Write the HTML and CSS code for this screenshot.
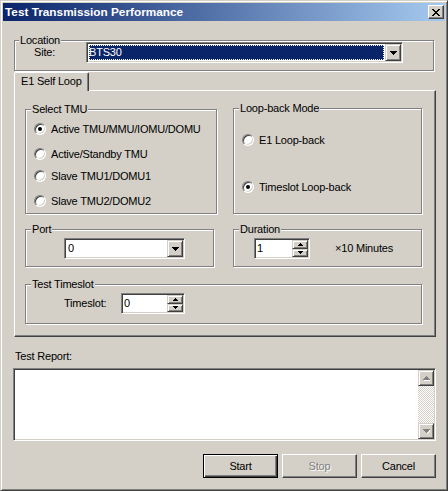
FILE: index.html
```html
<!DOCTYPE html>
<html>
<head>
<meta charset="utf-8">
<title>Test Transmission Performance</title>
<link rel="stylesheet" href="styles.css">
</head>
<body>
<div class="window">
  <div class="titlebar">
    <span class="title">Test Transmission Performance</span>
    <span class="close-btn">
      <svg width="8" height="7" viewBox="0 0 8 7" shape-rendering="crispEdges"><path fill="#000" d="M0 0h2v1H0zM6 0h2v1H6zM1 1h2v1H1zM5 1h2v1H5zM2 2h4v1H2zM3 3h2v1H3zM2 4h4v1H2zM1 5h2v1H1zM5 5h2v1H5zM0 6h2v1H0zM6 6h2v1H6z"/></svg>
    </span>
  </div>

  <div class="client">
    <div class="group loc-group">
      <span class="legend">Location</span>
      <div class="site-row">
        <span class="site-label">Site:</span>
        <div class="combo site-combo">
          <div class="combo-value"><span class="highlight">BTS30</span></div>
          <span class="drop-btn"><svg width="7" height="4" viewBox="0 0 7 4" shape-rendering="crispEdges"><path fill="#000" d="M0 0h7v1H0zM1 1h5v1H1zM2 2h3v1H2zM3 3h1v1H3z"/></svg></span>
        </div>
      </div>
    </div>

    <div class="tabs">
      <div class="tab">E1 Self Loop</div>
    </div>

    <div class="tab-panel">
      <div class="panel-grid">
        <div class="group tmu-group">
          <span class="legend">Select TMU</span>
          <div class="radio-row"><span class="radio checked"></span><span>Active TMU/MMU/IOMU/DOMU</span></div>
          <div class="radio-row"><span class="radio"></span><span>Active/Standby TMU</span></div>
          <div class="radio-row"><span class="radio"></span><span>Slave TMU1/DOMU1</span></div>
          <div class="radio-row"><span class="radio"></span><span>Slave TMU2/DOMU2</span></div>
        </div>

        <div class="group loop-group">
          <span class="legend">Loop-back Mode</span>
          <div class="radio-row"><span class="radio"></span><span>E1 Loop-back</span></div>
          <div class="radio-row"><span class="radio checked"></span><span>Timeslot Loop-back</span></div>
        </div>

        <div class="group port-group">
          <span class="legend">Port</span>
          <div class="combo port-combo">
            <div class="combo-value plain">0</div>
            <span class="drop-btn"><svg width="7" height="4" viewBox="0 0 7 4" shape-rendering="crispEdges"><path fill="#000" d="M0 0h7v1H0zM1 1h5v1H1zM2 2h3v1H2zM3 3h1v1H3z"/></svg></span>
          </div>
        </div>

        <div class="group dur-group">
          <span class="legend">Duration</span>
          <div class="field-row">
            <div class="spin dur-spin">
              <div class="spin-value">1</div>
              <div class="spin-btns">
                <span class="spin-btn"><svg width="5" height="3" viewBox="0 0 5 3" shape-rendering="crispEdges"><path fill="#000" d="M2 0h1v1H2zM1 1h3v1H1zM0 2h5v1H0z"/></svg></span>
                <span class="spin-btn"><svg width="5" height="3" viewBox="0 0 5 3" shape-rendering="crispEdges"><path fill="#000" d="M0 0h5v1H0zM1 1h3v1H1zM2 2h1v1H2z"/></svg></span>
              </div>
            </div>
            <span class="unit">×10 Minutes</span>
          </div>
        </div>

        <div class="group slot-group">
          <span class="legend">Test Timeslot</span>
          <div class="field-row">
            <span class="slot-label">Timeslot:</span>
            <div class="spin slot-spin">
              <div class="spin-value">0</div>
              <div class="spin-btns">
                <span class="spin-btn"><svg width="5" height="3" viewBox="0 0 5 3" shape-rendering="crispEdges"><path fill="#000" d="M2 0h1v1H2zM1 1h3v1H1zM0 2h5v1H0z"/></svg></span>
                <span class="spin-btn"><svg width="5" height="3" viewBox="0 0 5 3" shape-rendering="crispEdges"><path fill="#000" d="M0 0h5v1H0zM1 1h3v1H1zM2 2h1v1H2z"/></svg></span>
              </div>
            </div>
          </div>
        </div>
      </div>
    </div>

    <div class="report-label">Test Report:</div>
    <div class="report-box">
      <div class="report-text"></div>
      <div class="vscroll">
        <span class="scroll-btn"><svg width="7" height="5" viewBox="0 0 7 5" shape-rendering="crispEdges"><path fill="#fff" d="M4 1h1v1H4zM5 2h1v1H5zM1 4h7v1H1z"/><path fill="#808080" d="M3 0h1v1H3zM2 1h3v1H2zM1 2h5v1H1zM0 3h7v1H0z"/></svg></span>
        <span class="scroll-track"></span>
        <span class="scroll-btn"><svg width="7" height="5" viewBox="0 0 7 5" shape-rendering="crispEdges"><path fill="#fff" d="M1 1h7v1H1zM6 2h1v1H6zM5 3h1v1H5zM4 4h1v1H4z"/><path fill="#808080" d="M0 0h7v1H0zM1 1h5v1H1zM2 2h3v1H2zM3 3h1v1H3z"/></svg></span>
      </div>
    </div>

    <div class="buttons">
      <span class="btn default">Start</span>
      <span class="btn disabled">Stop</span>
      <span class="btn">Cancel</span>
    </div>
  </div>
</div>
</body>
</html>
```

FILE: styles.css
```css
html, body {
  margin: 0;
  padding: 0;
  background: #D4D0C8;
}

body {
  font-family: "Liberation Sans", Arial, sans-serif;
  font-size: 11px;
  line-height: 13px;
  letter-spacing: -0.2px;
  color: #000;
}

.window {
  width: 448px;
  height: 491px;
  box-sizing: border-box;
  border: 1px solid;
  border-color: #D4D0C8 #404040 #404040 #D4D0C8;
  box-shadow: inset 1px 1px 0 #fff, inset -1px -1px 0 #808080;
  padding: 2px;
  background: #D4D0C8;
  display: flex;
  flex-direction: column;
}

/* ---------- title bar ---------- */
.titlebar {
  height: 18px;
  flex: none;
  display: flex;
  align-items: center;
  justify-content: space-between;
  padding: 0 1px 0 2px;
  background: linear-gradient(to right, #0A246A, #A6CAF0);
}

.title {
  color: #fff;
  font-weight: bold;
  font-size: 11.8px;
  letter-spacing: 0;
}

.close-btn {
  width: 16px;
  height: 14px;
  box-sizing: border-box;
  border: 1px solid;
  border-color: #fff #404040 #404040 #fff;
  box-shadow: inset -1px -1px 0 #808080;
  background: #D4D0C8;
  display: flex;
  align-items: center;
  justify-content: center;
  padding-right: 1px;
}

.close-btn svg { display: block; }

/* ---------- client ---------- */
.client {
  display: flex;
  flex-direction: column;
  align-items: flex-start;
}

/* etched group box */
.group {
  position: relative;
  box-sizing: border-box;
  border: 1px solid #808080;
  box-shadow: inset 1px 1px 0 #fff, 1px 1px 0 #fff;
}

.legend {
  position: absolute;
  top: -7px;
  left: 5px;
  padding: 0 1px;
  line-height: 13px;
  background: #D4D0C8;
  white-space: nowrap;
}

.loc-group {
  margin: 19px 0 0 11px;
  width: 420px;
  height: 31px;
  padding-top: 1px;
}

.loc-group .legend { left: 4px; }

.site-row {
  display: flex;
  align-items: center;
}

.site-label {
  margin-left: 19px;
  width: 52px;
}

/* combo box */
.combo {
  display: flex;
  box-sizing: border-box;
  height: 21px;
  border: 1px solid;
  border-color: #808080 #fff #fff #808080;
  box-shadow: inset 1px 1px 0 #404040, inset -1px -1px 0 #D4D0C8;
  padding: 1px;
  background: #fff;
}

.combo-value {
  flex: 1;
  display: flex;
  align-items: center;
  background: #fff;
  min-width: 0;
}

.combo-value.plain { padding-left: 2px; }

.highlight {
  flex: 1;
  align-self: stretch;
  margin: 1px;
  display: flex;
  align-items: center;
  background: #0A246A;
  color: #fff;
  outline: 1px dotted #fff;
  outline-offset: -1px;
}

.drop-btn {
  width: 16px;
  box-sizing: border-box;
  border: 1px solid;
  border-color: #D4D0C8 #404040 #404040 #D4D0C8;
  box-shadow: inset 1px 1px 0 #fff, inset -1px -1px 0 #808080;
  background: #D4D0C8;
  display: flex;
  align-items: center;
  justify-content: center;
}

.drop-btn svg { display: block; }

.site-combo { width: 317px; }

/* ---------- tabs ---------- */
.tabs {
  margin: 1px 0 0 11px;
  height: 18px;
}

.tab {
  position: relative;
  z-index: 1;
  width: 75px;
  height: 19px;
  box-sizing: border-box;
  border-top: 1px solid #fff;
  border-left: 1px solid #fff;
  border-right: 1px solid #404040;
  border-radius: 2px 2px 0 0;
  box-shadow: inset -1px 0 0 #808080;
  background: #D4D0C8;
  padding: 1px 0 0 6px;
  line-height: 14px;
}

.tab-panel {
  margin-left: 11px;
  width: 422px;
  height: 247px;
  box-sizing: border-box;
  border: 1px solid;
  border-color: #fff #404040 #404040 #fff;
  box-shadow: inset -1px -1px 0 #808080;
  padding: 17px 0 0 10px;
}

.panel-grid {
  display: grid;
  grid-template-columns: 208px 189px;
  align-items: start;
}

.tmu-group {
  margin-top: 1px;
  width: 192px;
  height: 105px;
  padding-left: 8px;
}

.loop-group {
  width: 189px;
  height: 106px;
  padding-left: 8px;
}

.radio-row {
  display: flex;
  align-items: center;
  height: 16px;
  gap: 5px;
  white-space: nowrap;
}

.tmu-group .radio-row:nth-child(2) { margin-top: 11px; }
.tmu-group .radio-row:nth-child(3) { margin-top: 9px; }
.tmu-group .radio-row:nth-child(4) { margin-top: 6px; }
.tmu-group .radio-row:nth-child(5) { margin-top: 9px; }

.loop-group .radio-row:nth-child(2) { margin-top: 23px; }
.loop-group .radio-row:nth-child(3) { margin-top: 31px; }

.radio {
  flex: none;
  width: 12px;
  height: 12px;
  box-sizing: border-box;
  border-radius: 50%;
  border: 1px solid;
  border-color: #808080 #fff #fff #808080;
  box-shadow: inset 1px 1px 0 #404040, inset -1px -1px 0 #D4D0C8;
  background: #fff;
  display: flex;
  align-items: center;
  justify-content: center;
}

.radio.checked::after {
  content: "";
  width: 4px;
  height: 4px;
  border-radius: 50%;
  background: #000;
}

.port-group {
  margin-top: 15px;
  width: 189px;
  height: 38px;
  padding: 8px 0 0 38px;
}

.port-combo { width: 121px; }

.dur-group {
  margin-top: 15px;
  width: 189px;
  height: 38px;
  padding: 8px 0 0 20px;
}

.field-row {
  display: flex;
  align-items: center;
}

.unit {
  margin-left: 25px;
  white-space: nowrap;
}

.slot-group {
  grid-column: 1 / span 2;
  margin-top: 17px;
  width: 397px;
  height: 40px;
  padding: 8px 0 0 38px;
}

.slot-label { width: 57px; }

/* spin edit */
.spin {
  display: flex;
  box-sizing: border-box;
  height: 21px;
  border: 1px solid;
  border-color: #808080 #fff #fff #808080;
  box-shadow: inset 1px 1px 0 #404040, inset -1px -1px 0 #D4D0C8;
  padding: 1px;
  background: #fff;
}

.dur-spin { width: 56px; }
.slot-spin { width: 64px; }

.spin-value {
  flex: 1;
  display: flex;
  align-items: center;
  padding-left: 1px;
  background: #fff;
}

.spin-btns {
  width: 16px;
  display: flex;
  flex-direction: column;
}

.spin-btn {
  flex: 1;
  box-sizing: border-box;
  border: 1px solid;
  border-color: #D4D0C8 #404040 #404040 #D4D0C8;
  box-shadow: inset 1px 1px 0 #fff, inset -1px -1px 0 #808080;
  background: #D4D0C8;
  display: flex;
  align-items: center;
  justify-content: center;
}

.spin-btn svg { display: block; }

/* ---------- report ---------- */
.report-label {
  margin: 13px 0 0 12px;
}

.report-box {
  margin: 5px 0 0 10px;
  width: 423px;
  height: 73px;
  box-sizing: border-box;
  border: 1px solid;
  border-color: #808080 #fff #fff #808080;
  box-shadow: inset 1px 1px 0 #404040, inset -1px -1px 0 #D4D0C8;
  padding: 1px;
  display: flex;
}

.report-text {
  flex: 1;
  background: #fff;
}

.vscroll {
  width: 16px;
  display: flex;
  flex-direction: column;
}

.scroll-btn {
  height: 16px;
  flex: none;
  box-sizing: border-box;
  border: 1px solid;
  border-color: #D4D0C8 #404040 #404040 #D4D0C8;
  box-shadow: inset 1px 1px 0 #fff, inset -1px -1px 0 #808080;
  background: #D4D0C8;
  display: flex;
  align-items: center;
  justify-content: center;
}

.scroll-btn svg { display: block; }

.scroll-track {
  flex: 1;
  background: repeating-conic-gradient(#fff 0 25%, #D4D0C8 0 50%) 0 0 / 2px 2px;
}

/* ---------- buttons ---------- */
.buttons {
  align-self: stretch;
  display: flex;
  justify-content: flex-end;
  gap: 4px;
  margin: 13px 9px 0 0;
}

.btn {
  width: 75px;
  height: 24px;
  box-sizing: border-box;
  border: 1px solid;
  border-color: #fff #404040 #404040 #fff;
  box-shadow: inset -1px -1px 0 #808080;
  background: #D4D0C8;
  display: flex;
  align-items: center;
  justify-content: center;
}

.btn.default {
  border-color: #000;
  box-shadow: inset 1px 1px 0 #fff, inset -1px -1px 0 #404040, inset -2px -2px 0 #808080;
}

.btn.disabled {
  color: #808080;
  text-shadow: 1px 1px 0 #fff;
}
```
